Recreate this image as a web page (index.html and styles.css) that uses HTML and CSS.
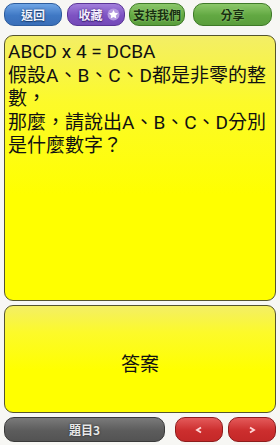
FILE: index.html
```html
<!DOCTYPE html>
<html lang="zh-Hant">
<head>
<meta charset="utf-8">
<link rel="stylesheet" href="styles.css">
</head>
<body>
<div class="page">
  <div class="topbar">
    <div class="btn blue w58">返回</div>
    <div class="btn purple w58 gap5">收藏
      <svg class="star" width="13" height="13" viewBox="0 0 24 24"><circle cx="12" cy="12" r="11" fill="#b49ae0"/><path d="M12 3.5l2.6 5.4 5.9.8-4.3 4.1 1 5.8L12 16.8 6.8 19.6l1-5.8-4.3-4.1 5.9-.8z" fill="#ffffff"/></svg>
    </div>
    <div class="btn green w56 gap4">支持我們</div>
    <div class="btn green w79 gap8">分享</div>
  </div>
  <div class="card question">ABCD x 4 = DCBA<br>假設A、B、C、D都是非零的整數，<br>那麼，請說出A、B、C、D分別是什麼數字？</div>
  <div class="card answer">答案</div>
  <div class="bottombar">
    <div class="btn grey w161">題目3</div>
    <div class="btn red w48 gap10"><svg width="8" height="8" viewBox="0 0 8 8"><path d="M6 1.5L2 4l4 2.5" fill="none" stroke="#ffd8d8" stroke-width="1.8"/></svg></div>
    <div class="btn red w48 gap5"><svg width="8" height="8" viewBox="0 0 8 8"><path d="M2 1.5L6 4l-4 2.5" fill="none" stroke="#ffd8d8" stroke-width="1.8"/></svg></div>
  </div>
</div>
</body>
</html>
```
FILE: styles.css
```css
html, body {
  margin: 0;
  padding: 0;
}
body {
  background: #f7f7f4;
  font-family: "Roboto", "Noto Sans CJK TC", sans-serif;
  width: 280px;
  height: 445px;
  overflow: hidden;
}
.page {
  display: flex;
  flex-direction: column;
  padding: 3px 4px 0 4px;
}
.topbar {
  display: flex;
  height: 23px;
}
.btn {
  box-sizing: border-box;
  display: flex;
  align-items: center;
  justify-content: center;
  border-radius: 10px;
  font-family: "Noto Sans CJK TC", sans-serif;
  font-size: 12px;
  font-weight: 700;
  gap: 4px;
}
.w58 { width: 58px; }
.w56 { width: 56px; }
.w79 { width: 79px; }
.w161 { width: 161px; }
.w48 { width: 48px; }
.gap4 { margin-left: 4px; }
.gap5 { margin-left: 5px; }
.gap8 { margin-left: 8px; }
.gap10 { margin-left: 10px; }
.blue {
  background: linear-gradient(#6fa6e6, #3f78c4 55%, #3a6fb8);
  border: 1px solid #2d5c9c;
  color: #eef4ff;
  text-shadow: 0 0 2px #1c3f70, 0 1px 1px #1c3f70;
}
.purple {
  background: linear-gradient(#a27fdc, #7d52c2 55%, #7449b8);
  border: 1px solid #5a3596;
  color: #f4eeff;
  text-shadow: 0 0 2px #3d2270, 0 1px 1px #3d2270;
  padding-left: 6px;
}
.star { flex: none; }
.green {
  background: linear-gradient(#8cc86a, #62a842 55%, #5a9e3c);
  border: 1px solid #3f7a28;
  color: #183010;
  text-shadow: 0 0 2px #a8dc8a;
}
.card {
  box-sizing: border-box;
  width: 272px;
  border: 1.5px solid #55552e;
  border-radius: 9px;
  background: linear-gradient(#f3ee66, #fcfa2a 25%, #ffff00 60%, #ffff00);
  color: #111;
}
.question {
  margin-top: 9px;
  height: 266px;
  padding: 4px 3px 0 3px;
  font-size: 19px;
  line-height: 23.5px;
}
.answer {
  margin-top: 4px;
  height: 108px;
  display: flex;
  align-items: center;
  justify-content: center;
  font-family: "Noto Sans CJK TC", sans-serif;
  font-size: 19px;
  padding-top: 6px;
}
.bottombar {
  display: flex;
  margin-top: 4px;
  height: 25px;
}
.grey {
  background: linear-gradient(#7a7a7a, #5c5c5c 55%, #535353);
  border: 1px solid #3a3a3a;
  color: #e8e8e8;
  text-shadow: 0 0 2px #222;
}
.red {
  background: linear-gradient(#e45a5a, #cc2e2e 55%, #c42828);
  border: 1px solid #8e1c1c;
}
```
